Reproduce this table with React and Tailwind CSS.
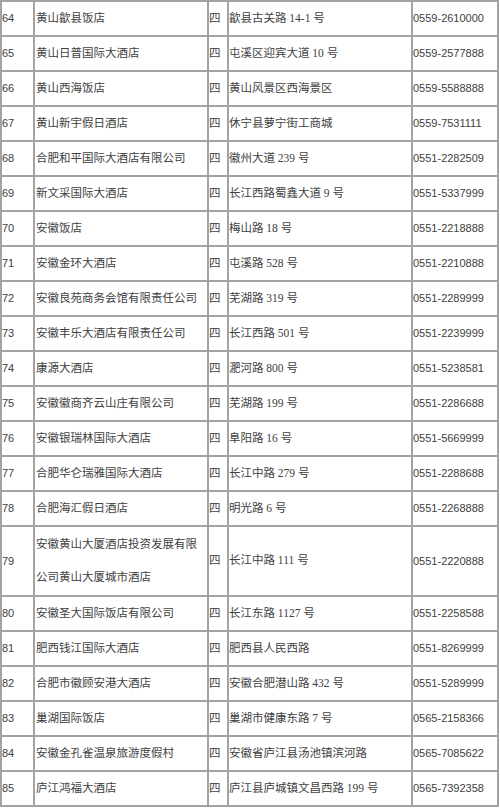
import React from "react";

const rows = [
  ["64", "黄山歙县饭店", "歙县古关路 14-1 号", "0559-2610000"],
  ["65", "黄山日普国际大酒店", "屯溪区迎宾大道 10 号", "0559-2577888"],
  ["66", "黄山西海饭店", "黄山风景区西海景区", "0559-5588888"],
  ["67", "黄山新宇假日酒店", "休宁县萝宁街工商城", "0559-7531111"],
  ["68", "合肥和平国际大酒店有限公司", "徽州大道 239 号", "0551-2282509"],
  ["69", "新文采国际大酒店", "长江西路蜀鑫大道 9 号", "0551-5337999"],
  ["70", "安徽饭店", "梅山路 18 号", "0551-2218888"],
  ["71", "安徽金环大酒店", "屯溪路 528 号", "0551-2210888"],
  ["72", "安徽良苑商务会馆有限责任公司", "芜湖路 319 号", "0551-2289999"],
  ["73", "安徽丰乐大酒店有限责任公司", "长江西路 501 号", "0551-2239999"],
  ["74", "康源大酒店", "淝河路 800 号", "0551-5238581"],
  ["75", "安徽徽商齐云山庄有限公司", "芜湖路 199 号", "0551-2286688"],
  ["76", "安徽银瑞林国际大酒店", "阜阳路 16 号", "0551-5669999"],
  ["77", "合肥华仑瑞雅国际大酒店", "长江中路 279 号", "0551-2288688"],
  ["78", "合肥海汇假日酒店", "明光路 6 号", "0551-2268888"],
  ["79", ["安徽黄山大厦酒店投资发展有限", "公司黄山大厦城市酒店"], "长江中路 111 号", "0551-2220888"],
  ["80", "安徽圣大国际饭店有限公司", "长江东路 1127 号", "0551-2258588"],
  ["81", "肥西钱江国际大酒店", "肥西县人民西路", "0551-8269999"],
  ["82", "合肥市徽顾安港大酒店", "安徽合肥潜山路 432 号", "0551-5289999"],
  ["83", "巢湖国际饭店", "巢湖市健康东路 7 号", "0565-2158366"],
  ["84", "安徽金孔雀温泉旅游度假村", "安徽省庐江县汤池镇滨河路", "0565-7085622"],
  ["85", "庐江鸿福大酒店", "庐江县庐城镇文昌西路 199 号", "0565-7392358"],
];

export default function App() {
  return (
    <div className="w-[500px] h-[808px] bg-white overflow-hidden text-[#404040]">
      <div className="w-[499px] border-l-2 border-t-2 border-[#a3a3a3]">
        {rows.map(([no, name, addr, tel]) => {
          const tall = Array.isArray(name);
          return (
            <div key={no} className={tall ? "flex h-[70px]" : "flex h-[35px]"}>
              <div className="w-[33px] shrink-0 border-r-2 border-b-2 border-[#a3a3a3] flex items-center text-[11px] font-['Liberation_Sans',Arial,sans-serif]">
                {no}
              </div>
              <div className="w-[174px] shrink-0 border-r-2 border-b-2 border-[#a3a3a3] flex flex-col justify-center pl-px text-[11.5px] whitespace-nowrap font-['Liberation_Serif','Noto_Sans_CJK_SC',serif]">
                {tall ? (
                  name.map((l) => (
                    <div key={l} className="leading-[33px]">
                      {l}
                    </div>
                  ))
                ) : (
                  <div>{name}</div>
                )}
              </div>
              <div className="w-[20px] shrink-0 border-r-2 border-b-2 border-[#a3a3a3] flex items-center text-[11.5px] font-['Liberation_Serif','Noto_Sans_CJK_SC',serif]">
                四
              </div>
              <div className="w-[184px] shrink-0 border-r-2 border-b-2 border-[#a3a3a3] flex items-center text-[11.5px] whitespace-nowrap font-['Liberation_Serif','Noto_Sans_CJK_SC',serif]">
                {addr}
              </div>
              <div className="w-[86px] shrink-0 border-r-2 border-b-2 border-[#a3a3a3] flex items-center text-[11px] whitespace-nowrap font-['Liberation_Sans',Arial,sans-serif]">
                {tel}
              </div>
            </div>
          );
        })}
      </div>
    </div>
  );
}
